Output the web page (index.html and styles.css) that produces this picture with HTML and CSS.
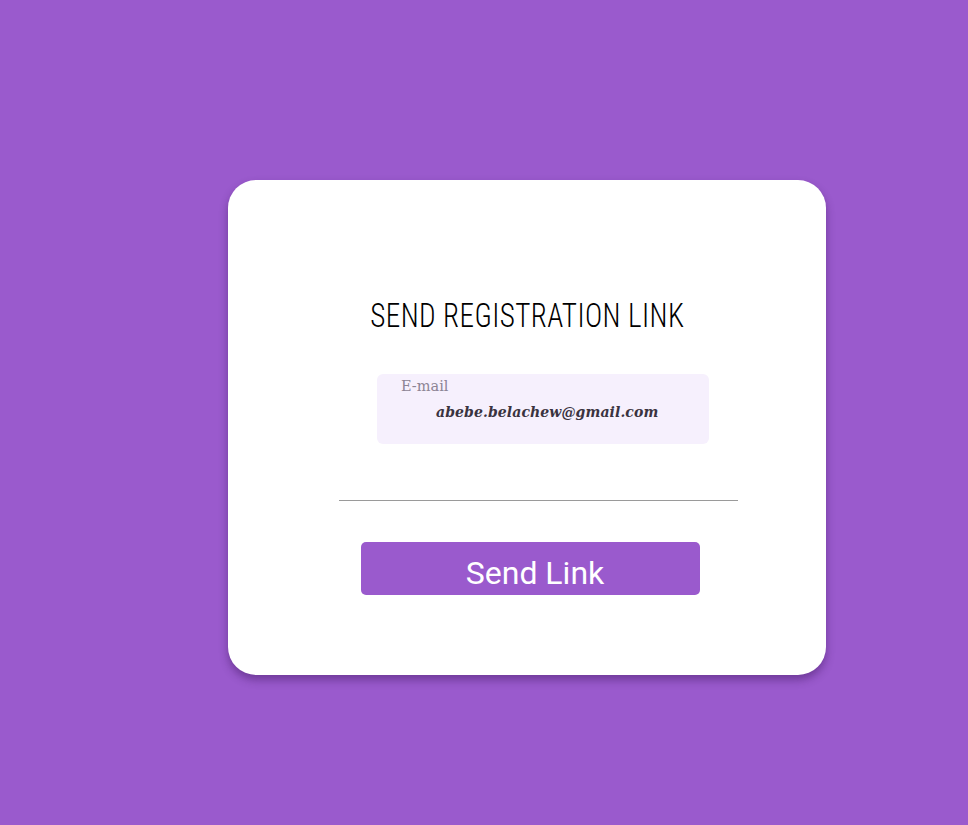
FILE: index.html
```html
<!DOCTYPE html>
<html>
<head>
<meta charset="utf-8">
<link rel="stylesheet" href="styles.css">
</head>
<body>
<div class="page">
  <div class="card">
    <h1 class="title">SEND REGISTRATION LINK</h1>
    <div class="field">
      <div class="field-label">E-mail</div>
      <div class="field-value">abebe.belachew@gmail.com</div>
    </div>
    <div class="divider"></div>
    <button class="send-btn">Send Link</button>
  </div>
</div>
</body>
</html>
```
FILE: styles.css
```css
html, body {
  margin: 0;
  padding: 0;
  background: #9a5acd;
  height: 100%;
}
.page {
  padding: 180px 0 0 228px;
}
.card {
  width: 598px;
  height: 495px;
  box-sizing: border-box;
  background: #ffffff;
  border-radius: 28px;
  box-shadow: 0 5px 8px rgba(60, 20, 90, 0.45);
  display: flex;
  flex-direction: column;
  align-items: flex-start;
  padding-top: 115px;
}
.title {
  margin: 0;
  align-self: center;
  font-family: "Roboto", sans-serif;
  font-weight: 300;
  font-size: 34px;
  line-height: 40px;
  color: #000;
  font-stretch: condensed;
  transform: scaleX(0.857);
  white-space: nowrap;
  letter-spacing: 0.5px;
}
.field {
  margin: 39px 0 0 149px;
  width: 332px;
  height: 70px;
  box-sizing: border-box;
  background: #f6f0fd;
  border-radius: 6px;
  padding: 3px 0 0 24px;
}
.field-label {
  font-family: "DejaVu Serif", "Liberation Serif", serif;
  font-size: 14.5px;
  line-height: 18px;
  color: #8c8494;
}
.field-value {
  margin: 8px 0 0 35px;
  font-family: "DejaVu Serif", serif;
  font-style: italic;
  font-weight: bold;
  font-size: 14px;
  line-height: 18px;
  color: #3a3340;
  letter-spacing: 0.1px;
}
.divider {
  margin: 56px 0 0 111px;
  width: 399px;
  height: 1px;
  background: #9a9a9a;
}
.send-btn {
  margin: 41px 0 0 133px;
  width: 339px;
  height: 53px;
  border: none;
  border-radius: 5px;
  background: #9a5acd;
  color: #fff;
  font-family: "Roboto", sans-serif;
  font-size: 32px;
  padding: 9px 0 0 9px;
  line-height: 40px;
}
```
